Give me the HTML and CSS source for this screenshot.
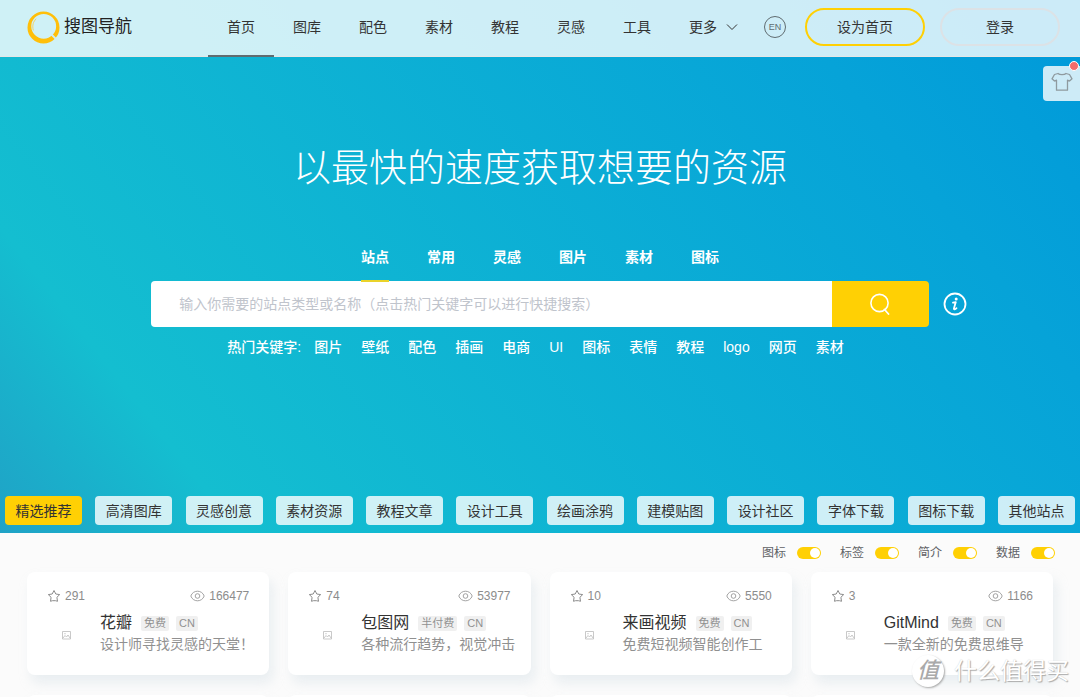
FILE: index.html
```html
<!DOCTYPE html>
<html lang="zh-CN">
<head>
<meta charset="utf-8">
<title>搜图导航</title>
<link rel="stylesheet" href="styles.css">
</head>
<body>
<svg class="sprite" aria-hidden="true">
  <symbol id="star" viewBox="0 0 14 14"><path d="M7 1.500l1.800 3.500 3.900.6-2.800 2.700.6 4-1.900-.6H5.400l-1.900.6.6-4L1.300 5.600 5.200 5z" fill="none" stroke="currentColor" stroke-linejoin="round"/></symbol>
  <symbol id="eye" viewBox="0 0 15 12"><path d="M.8 6C3-.4 12-.4 14.200 6 12 12.400 3 12.400.8 6z" fill="none" stroke="currentColor" stroke-width=".8"/><circle cx="7.500" cy="6" r="2.300" fill="none" stroke="currentColor" stroke-width=".8"/></symbol>
  <symbol id="pic" viewBox="0 0 9 9"><path d="M.5.5h8v7.500h-8zM1 7l2-2.500 1.500 1.500L6 4l2 3" fill="none" stroke="currentColor" stroke-width=".8"/><circle cx="3" cy="2.700" r=".6" fill="currentColor"/></symbol>
</svg>

<div class="hero">
  <header class="header">
    <a class="logo" href="#">
      <svg class="logo-mark" viewBox="0 0 34 34" aria-hidden="true">
        <path fill="#ffbf0a" fill-rule="evenodd" d="M17 .5a16.500 16.500 0 1 1 0 33 16.500 16.500 0 0 1 0-33zM17.200 3a12.800 12.800 0 1 0 0 25.600 12.800 12.800 0 0 0 0-25.600z"/>
        <path d="M25 24l6.500 6.500" stroke="#cfeff5" stroke-width="2"/>
        <path d="M6.500 20C5.200 14.500 6.500 11 9.500 8" fill="none" stroke="#ffc93a" stroke-width=".8"/>
      </svg>
      <span>搜图导航</span>
    </a>
    <nav class="nav">
      <a class="active" href="#">首页</a><a href="#">图库</a><a href="#">配色</a><a href="#">素材</a><a href="#">教程</a><a href="#">灵感</a><a href="#">工具</a>
      <a class="more" href="#">更多<svg class="chevron" viewBox="0 0 12 8" aria-hidden="true"><path d="M1 1.500l5 5 5-5" fill="none" stroke="currentColor"/></svg></a>
    </nav>
    <div class="account">
      <button class="lang" type="button">EN</button>
      <button class="pill pill-home" type="button">设为首页</button>
      <button class="pill" type="button">登录</button>
    </div>
  </header>

  <button class="skin" type="button" aria-label="换肤">
    <svg class="shirt" viewBox="0 0 22 20" aria-hidden="true"><path d="M7 1.500c1.500 1.600 6.500 1.600 8 0l3.500 1L21 6.800 18.500 9l-2-.8v10h-11v-10l-2 .8L1 6.800l2.500-4.300z" fill="none" stroke="currentColor" stroke-width="1.300" stroke-linejoin="round"/></svg>
    <i class="dot"></i>
  </button>

  <h1 class="title">以最快的速度获取想要的资源</h1>

  <div class="tabs">
    <a class="active" href="#">站点</a><a href="#">常用</a><a href="#">灵感</a><a href="#">图片</a><a href="#">素材</a><a href="#">图标</a>
  </div>
  <div class="search-row">
    <form class="search">
      <input type="text" aria-label="搜索" placeholder="输入你需要的站点类型或名称（点击热门关键字可以进行快捷搜索）">
      <button type="button" aria-label="搜索"><svg class="lens" viewBox="0 0 22 22" aria-hidden="true"><circle cx="10.500" cy="10" r="8.600" fill="none" stroke="currentColor" stroke-width="1.600"/><path d="M15.500 16.500l4 4.500" stroke="currentColor" stroke-width="1.800" stroke-linecap="round"/></svg></button>
    </form>
    <svg class="info" viewBox="0 0 24 24" aria-hidden="true"><circle cx="12" cy="12" r="10.500" fill="none" stroke="currentColor" stroke-width="1.800"/><circle cx="13.200" cy="6.900" r="1.500" fill="currentColor"/><path d="M10 10.700l2.800-.6-1.900 6.400c-.3 1.300 1.300.9 2.600-.4" fill="none" stroke="currentColor" stroke-width="1.800" stroke-linecap="round" stroke-linejoin="round"/></svg>
  </div>
  <div class="keywords">
    <span>热门关键字:</span>
    <a href="#">图片</a><a href="#">壁纸</a><a href="#">配色</a><a href="#">插画</a><a href="#">电商</a><a href="#">UI</a><a href="#">图标</a><a href="#">表情</a><a href="#">教程</a><a href="#">logo</a><a href="#">网页</a><a href="#">素材</a>
  </div>

  <div class="chips">
    <button class="active" type="button">精选推荐</button><button type="button">高清图库</button><button type="button">灵感创意</button><button type="button">素材资源</button><button type="button">教程文章</button><button type="button">设计工具</button><button type="button">绘画涂鸦</button><button type="button">建模贴图</button><button type="button">设计社区</button><button type="button">字体下载</button><button type="button">图标下载</button><button type="button">其他站点</button>
  </div>
</div>

<main class="main">
  <div class="switches">
    <label>图标<input type="checkbox" checked></label>
    <label>标签<input type="checkbox" checked></label>
    <label>简介<input type="checkbox" checked></label>
    <label>数据<input type="checkbox" checked></label>
  </div>
  <div class="cards">
    <article class="card">
      <div class="stats"><span><svg class="i-star"><use href="#star"/></svg>291</span><span><svg class="i-eye"><use href="#eye"/></svg>166477</span></div>
      <div class="body"><svg class="i-pic"><use href="#pic"/></svg>
        <div class="text"><h2><a href="#">花瓣</a><em>免费</em><em>CN</em></h2><p>设计师寻找灵感的天堂！</p></div></div>
    </article>
    <article class="card">
      <div class="stats"><span><svg class="i-star"><use href="#star"/></svg>74</span><span><svg class="i-eye"><use href="#eye"/></svg>53977</span></div>
      <div class="body"><svg class="i-pic"><use href="#pic"/></svg>
        <div class="text"><h2><a href="#">包图网</a><em>半付费</em><em>CN</em></h2><p>各种流行趋势，视觉冲击</p></div></div>
    </article>
    <article class="card">
      <div class="stats"><span><svg class="i-star"><use href="#star"/></svg>10</span><span><svg class="i-eye"><use href="#eye"/></svg>5550</span></div>
      <div class="body"><svg class="i-pic"><use href="#pic"/></svg>
        <div class="text"><h2><a href="#">来画视频</a><em>免费</em><em>CN</em></h2><p>免费短视频智能创作工</p></div></div>
    </article>
    <article class="card">
      <div class="stats"><span><svg class="i-star"><use href="#star"/></svg>3</span><span><svg class="i-eye"><use href="#eye"/></svg>1166</span></div>
      <div class="body"><svg class="i-pic"><use href="#pic"/></svg>
        <div class="text"><h2><a href="#">GitMind</a><em>免费</em><em>CN</em></h2><p>一款全新的免费思维导</p></div></div>
    </article>
    <article class="card"></article>
    <article class="card"></article>
    <article class="card"></article>
    <article class="card"></article>
  </div>
</main>

<div class="watermark"><b>值</b><span>什么值得买</span></div>
</body>
</html>
```
FILE: styles.css
```css
* { box-sizing: border-box; }

body {
  position: relative;
  display: flex;
  flex-direction: column;
  margin: 0;
  height: 100vh;
  overflow: hidden;
  background: #fbfbfb;
  color: #333;
  font-family: "Liberation Sans", "Noto Sans CJK SC", sans-serif;
  font-size: 14px;
  line-height: 20px;
}

a { color: inherit; text-decoration: none; }
button, input { font: inherit; color: inherit; margin: 0; }
button { border: 0; padding: 0; cursor: pointer; }
svg { display: block; flex: none; }
.sprite { display: none; }

.hero {
  position: relative;
  flex: none;
  background: linear-gradient(52deg, #20a2c6 0%, #14bed0 16%, #06a3d8 80%, #0099da 100%);
}

.header {
  display: flex;
  align-items: center;
  height: 57px;
  padding: 0 20px 2px 27px;
  background: rgba(255, 255, 255, .8);
  border-bottom: 1px solid #e6e6e6;
}

.logo { display: flex; align-items: center; gap: 4px; width: 181px; font-size: 17px; color: #222; }
.logo-mark { width: 33px; height: 33px; }

.nav { display: flex; height: 57px; }
.nav a { display: flex; align-items: center; height: 58px; padding: 0 19px; border-bottom: 2px solid transparent; }
.nav .active { border-color: #606c70; }
.nav .more { gap: 9px; padding-right: 0; }
.chevron { width: 12px; height: 8px; }

.account { display: flex; align-items: center; margin-left: auto; }
.lang {
  width: 22px; height: 22px; margin-right: 19px;
  border: 1px solid #606c70; border-radius: 50%;
  background: none; font-size: 9px; line-height: 20px; color: #606c70;
}
.pill { width: 120px; height: 38px; border: 2px solid #dce2e6; border-radius: 19px; background: none; }
.pill-home { margin-right: 15px; border-color: #ffd004; }

.skin {
  position: absolute; right: 0; top: 66px;
  display: grid; place-items: center;
  width: 37px; height: 35px;
  border-radius: 4px 0 0 4px;
  background: #cdebf7; color: #8f9a9f;
}
.shirt { width: 22px; height: 20px; margin-bottom: 4px; }
.dot {
  position: absolute; top: -5px; right: 1px;
  width: 10px; height: 10px;
  border: 1px solid #fff; border-radius: 50%; background: #f56c6c;
}

.title {
  margin: 83px 0 0;
  color: #fff;
  font-size: 38px; line-height: 56px; font-weight: 300;
  text-align: center;
}

.tabs { display: flex; justify-content: center; position: relative; margin-top: 48px; color: #fff; font-weight: 700; }
.tabs a { height: 38px; margin: 0 19px; padding-top: 3px; border-bottom: 2px solid transparent; }
.tabs .active { border-color: #ead32a; }

.search-row { display: grid; grid-template-columns: 1fr 72% 1fr; align-items: center; margin-top: -1px; }
.search { grid-column: 2; display: flex; height: 46px; border-radius: 4px; overflow: hidden; }
.search input { flex: 1; min-width: 0; padding: 0 28px; border: 0; outline: 0; background: #fff; }
.search input::placeholder { color: #c0c4cc; opacity: 1; }
.search button { display: grid; place-items: center; width: 97px; background: #ffd004; color: #fff; }
.lens { width: 22px; height: 22px; }
.info { width: 24px; height: 24px; margin-left: 14px; color: #fff; }

.keywords { display: flex; justify-content: center; gap: 1px; margin-top: 10px; color: #fff; font-weight: 500; }
.keywords span { margin-right: 3px; }
.keywords a { padding: 0 9px; }

.chips { display: flex; justify-content: space-between; padding: 139px 5px 8px; }
.chips button { width: 77px; height: 29px; border-radius: 4px; background: rgba(255, 255, 255, .8); }
.chips .active { background: #ffd004; }

.main { flex: 1; min-height: 0; padding: 0 27px; overflow: hidden; }
.switches { display: flex; justify-content: flex-end; gap: 19px; height: 39px; margin-right: -2px; font-size: 12px; color: #606266; }
.switches label { display: flex; align-items: center; gap: 11px; }
.switches input {
  appearance: none;
  display: flex; justify-content: flex-end;
  width: 24px; height: 12px; padding: 1px;
  border-radius: 6px; background: #ffd004;
}
.switches input::before { content: ""; width: 10px; height: 10px; border-radius: 50%; background: #fff; }

.cards { display: grid; grid-template-columns: repeat(4, minmax(0, 1fr)); gap: 20px 19px; }
.card {
  min-height: 103px; padding: 14px 20px;
  border-radius: 8px; background: #fff;
  box-shadow: 4px 8px 12px rgba(200, 214, 224, .35);
}
.stats { display: flex; justify-content: space-between; font-size: 12px; color: #8c8c8c; }
.stats span { display: flex; align-items: center; gap: 4px; }
.i-star { width: 14px; height: 14px; }
.i-eye { width: 15px; height: 12px; }
.body { display: flex; gap: 29px; padding-left: 15px; margin-top: 7px; }
.i-pic { width: 9px; height: 9px; margin-top: 18px; color: #bbb; }
.text { white-space: nowrap; }
.text h2 { display: flex; align-items: center; margin: 0; height: 20px; font-size: 16px; font-weight: 400; }
.text em {
  margin-left: 7px; padding: 0 3px;
  border-radius: 2px; background: #f0f0f0;
  font-size: 11px; line-height: 15px; font-style: normal; color: #909090;
}
.text a + em { margin-left: 9px; }
.text p { margin: 1px 0 0; color: #909090; }

.watermark {
  position: absolute; right: 11px; bottom: 10px;
  display: flex; align-items: center; gap: 10px;
  color: #fff; font-size: 23px; line-height: 32px;
  text-shadow: 1px 1px 1px #aaa, 0 0 1px #ccc;
}
.watermark b {
  width: 32px; height: 32px; border-radius: 50%;
  background: #fff; box-shadow: 1px 1px 2px #aaa;
  color: #aaa; font-size: 22px; font-weight: 500; text-align: center; text-shadow: none;
  font-style: italic;
}
```
